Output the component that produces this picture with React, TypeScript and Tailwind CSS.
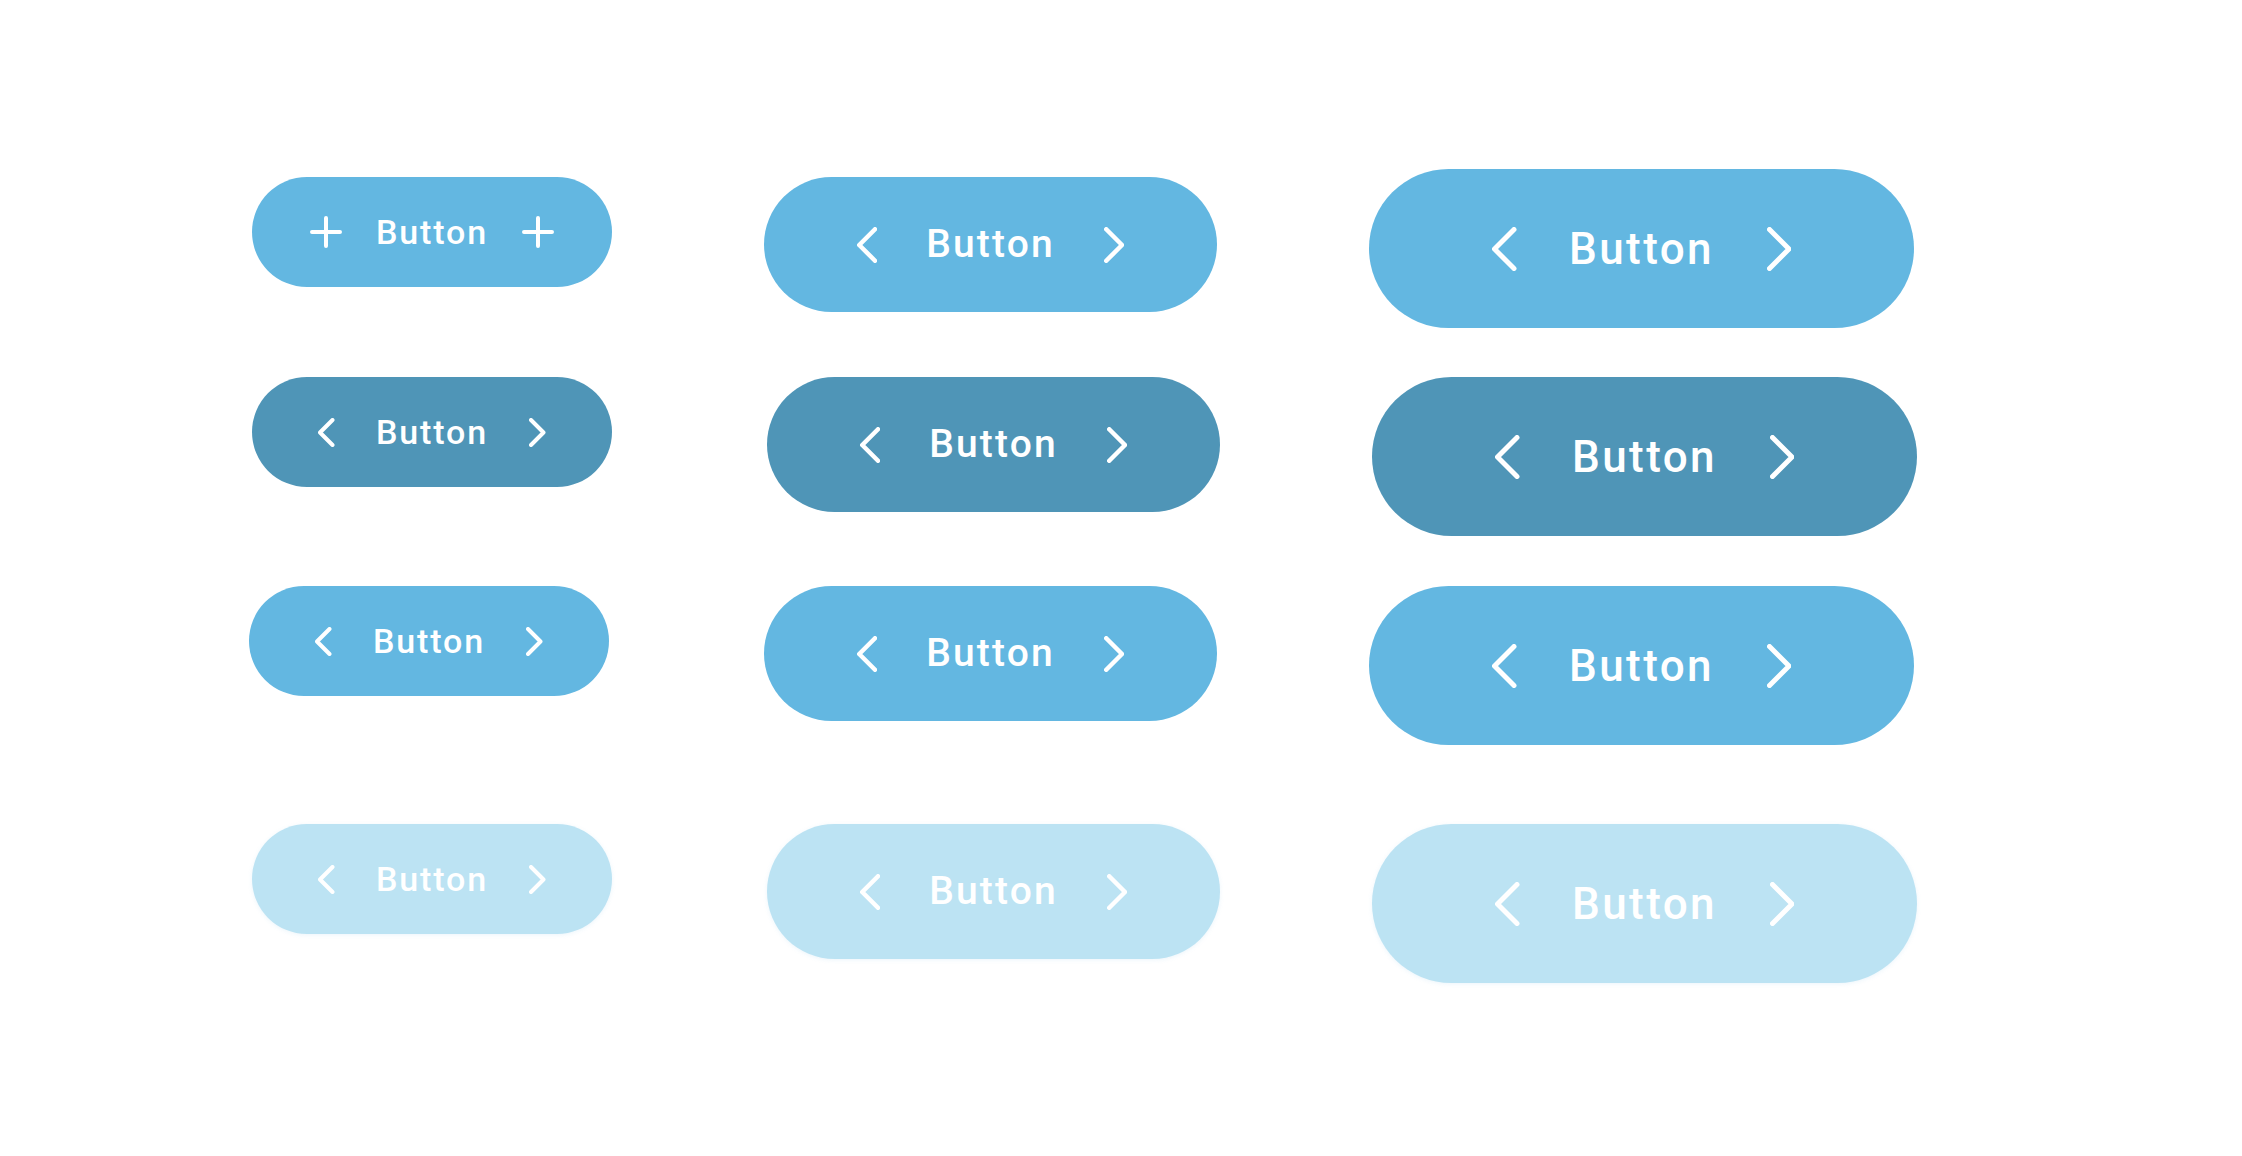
import React from 'react'

type Size = 'sm' | 'md' | 'lg'
type Tone = 'base' | 'dark' | 'pale'

// chevron drawn as two 45deg strokes: h = half height of the centre line, s = stroke
function Chevron({ dir, h, s }: { dir: 'left' | 'right'; h: number; s: number }) {
  const w = h + s
  const ht = 2 * h + s
  const d =
    dir === 'left'
      ? `M${h + s / 2} ${s / 2} L${s / 2} ${h + s / 2} L${h + s / 2} ${2 * h + s / 2}`
      : `M${s / 2} ${s / 2} L${h + s / 2} ${h + s / 2} L${s / 2} ${2 * h + s / 2}`
  return (
    <svg width={w} height={ht} viewBox={`0 0 ${w} ${ht}`} fill="none" className="shrink-0">
      <path d={d} stroke="white" strokeWidth={s} strokeLinecap="round" strokeLinejoin="round" />
    </svg>
  )
}

function Plus({ size, s }: { size: number; s: number }) {
  const c = size / 2
  return (
    <svg width={size} height={size} viewBox={`0 0 ${size} ${size}`} fill="none" className="shrink-0">
      <path d={`M${c} ${s / 2} V${size - s / 2} M${s / 2} ${c} H${size - s / 2}`} stroke="white" strokeWidth={s} strokeLinecap="round" />
    </svg>
  )
}

const sizeClass: Record<Size, string> = {
  sm: 'w-[360px] h-[110px] text-[34px]',
  md: 'w-[453px] h-[135px] px-[93px] text-[39px]',
  lg: 'w-[545px] h-[159px] px-[123px] text-[44px]',
}

const toneClass: Record<Tone, string> = {
  base: 'bg-[#63b7e1]',
  dark: 'bg-[#4f95b7]',
  pale: 'bg-[#bce3f3] shadow-[0_1px_4px_rgba(120,190,225,0.15)]',
}

const chevron: Record<Size, { h: number; s: number }> = {
  sm: { h: 12.5, s: 4 },
  md: { h: 15.75, s: 4.5 },
  lg: { h: 19.5, s: 5 },
}

function PillButton({
  size,
  tone,
  plus,
  className = '',
}: {
  size: Size
  tone: Tone
  plus?: boolean
  className?: string
}) {
  const c = chevron[size]
  const pad = size === 'sm' ? (plus ? 'px-[58px]' : 'px-[66px]') : ''
  return (
    <button
      className={`flex items-center justify-between rounded-full font-medium tracking-[0.055em] text-white ${sizeClass[size]} ${pad} ${toneClass[tone]} ${className}`}
      style={{ fontFamily: 'Roboto, "Liberation Sans", sans-serif' }}
    >
      {plus ? <Plus size={32} s={4} /> : <Chevron dir="left" h={c.h} s={c.s} />}
      <span className="leading-none">Button</span>
      {plus ? <Plus size={32} s={4} /> : <Chevron dir="right" h={c.h} s={c.s} />}
    </button>
  )
}

export default function App() {
  return (
    <div className="min-h-[1156px] w-full bg-white pl-[252px] pt-[177px]">
      <div className="grid grid-cols-[360px_453px_545px] grid-rows-[200px_209px_238px_auto] items-start gap-x-[152px]">
        <PillButton size="sm" tone="base" plus />
        <PillButton size="md" tone="base" />
        <PillButton size="lg" tone="base" className="-mt-[8px]" />

        <PillButton size="sm" tone="dark" />
        <PillButton size="md" tone="dark" className="ml-[3px]" />
        <PillButton size="lg" tone="dark" className="ml-[3px]" />

        <PillButton size="sm" tone="base" className="-ml-[3px]" />
        <PillButton size="md" tone="base" />
        <PillButton size="lg" tone="base" />

        <PillButton size="sm" tone="pale" />
        <PillButton size="md" tone="pale" className="ml-[3px]" />
        <PillButton size="lg" tone="pale" className="ml-[3px]" />
      </div>
    </div>
  )
}
